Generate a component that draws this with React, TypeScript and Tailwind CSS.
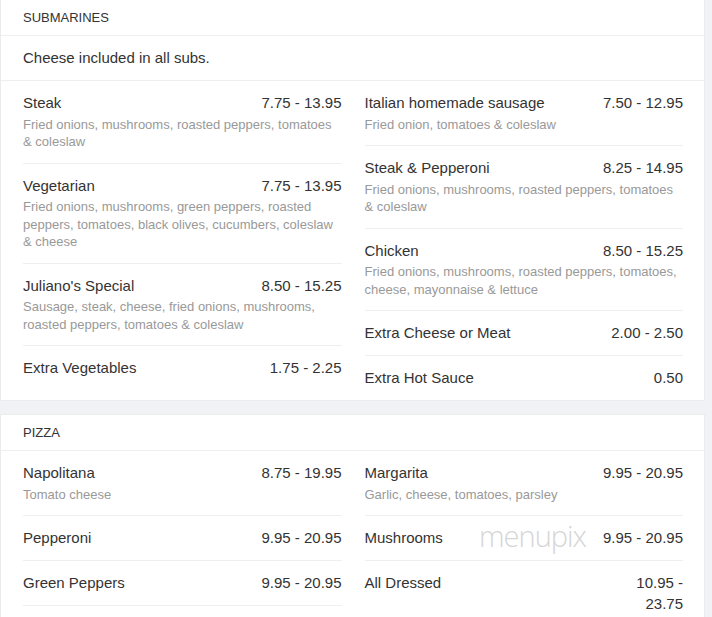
import React from "react";

type Item = { name: string; price: string; desc?: string };

const subsLeft: Item[] = [
  { name: "Steak", price: "7.75 - 13.95", desc: "Fried onions, mushrooms, roasted peppers, tomatoes & coleslaw" },
  { name: "Vegetarian", price: "7.75 - 13.95", desc: "Fried onions, mushrooms, green peppers, roasted peppers, tomatoes, black olives, cucumbers, coleslaw & cheese" },
  { name: "Juliano's Special", price: "8.50 - 15.25", desc: "Sausage, steak, cheese, fried onions, mushrooms, roasted peppers, tomatoes & coleslaw" },
  { name: "Extra Vegetables", price: "1.75 - 2.25" },
];

const subsRight: Item[] = [
  { name: "Italian homemade sausage", price: "7.50 - 12.95", desc: "Fried onion, tomatoes & coleslaw" },
  { name: "Steak & Pepperoni", price: "8.25 - 14.95", desc: "Fried onions, mushrooms, roasted peppers, tomatoes & coleslaw" },
  { name: "Chicken", price: "8.50 - 15.25", desc: "Fried onions, mushrooms, roasted peppers, tomatoes, cheese, mayonnaise & lettuce" },
  { name: "Extra Cheese or Meat", price: "2.00 - 2.50" },
  { name: "Extra Hot Sauce", price: "0.50" },
];

const pizzaLeft: Item[] = [
  { name: "Napolitana", price: "8.75 - 19.95", desc: "Tomato cheese" },
  { name: "Pepperoni", price: "9.95 - 20.95" },
  { name: "Green Peppers", price: "9.95 - 20.95" },
];

const pizzaRight: Item[] = [
  { name: "Margarita", price: "9.95 - 20.95", desc: "Garlic, cheese, tomatoes, parsley" },
  { name: "Mushrooms", price: "9.95 - 20.95" },
  { name: "All Dressed", price: "10.95 - 23.75" },
];

function Row({ item, last }: { item: Item; last: boolean }) {
  return (
    <div className={"pt-[11px] pb-3 " + (last ? "" : "border-b border-[#efefef]")}>
      <div className="flex justify-between gap-3 text-[15px] leading-[21px] text-[#333]">
        <span>{item.name}</span>
        <span className="max-w-[86px] shrink-0 text-right">{item.price}</span>
      </div>
      {item.desc && (
        <div className="mt-[2.5px] text-[13px] leading-[17.5px] text-[#999]">{item.desc}</div>
      )}
    </div>
  );
}

function Column({ items, lastNoBorder }: { items: Item[]; lastNoBorder: boolean }) {
  return (
    <div className="flex flex-col">
      {items.map((it, i) => (
        <Row key={it.name} item={it} last={lastNoBorder && i === items.length - 1} />
      ))}
    </div>
  );
}

function Section({
  title,
  note,
  left,
  right,
  lastNoBorder,
}: {
  title: string;
  note?: string;
  left: Item[];
  right: Item[];
  lastNoBorder: boolean;
}) {
  return (
    <div className="w-[705px] border border-[#ebebeb] bg-white">
      <div className="flex h-[36px] items-center border-b border-[#efefef] pl-[22px] text-[13px] text-[#333]">
        {title}
      </div>
      {note && (
        <div className="flex h-[45px] items-center border-b border-[#efefef] pl-[22px] text-[15px] text-[#333]">
          {note}
        </div>
      )}
      <div className="grid grid-cols-2 gap-x-[23px] pl-[22px] pr-[21px]">
        <Column items={left} lastNoBorder={lastNoBorder} />
        <Column items={right} lastNoBorder={lastNoBorder} />
      </div>
    </div>
  );
}

export default function App() {
  return (
    <div
      className="relative min-h-screen overflow-hidden bg-[#f1f2f6]"
      style={{ fontFamily: '"Liberation Sans", Arial, sans-serif' }}
    >
      <div className="-mt-px flex flex-col gap-[13px]">
        <Section
          title="SUBMARINES"
          note="Cheese included in all subs."
          left={subsLeft}
          right={subsRight}
          lastNoBorder={true}
        />
        <Section title="PIZZA" left={pizzaLeft} right={pizzaRight} lastNoBorder={false} />
      </div>
      <div
        className="pointer-events-none absolute left-[479px] top-[514px] text-[29px] font-light tracking-[-1px] text-[#d6d6d6]"
        style={{ fontFamily: '"Open Sans", sans-serif' }}
      >
        menupix
      </div>
    </div>
  );
}
